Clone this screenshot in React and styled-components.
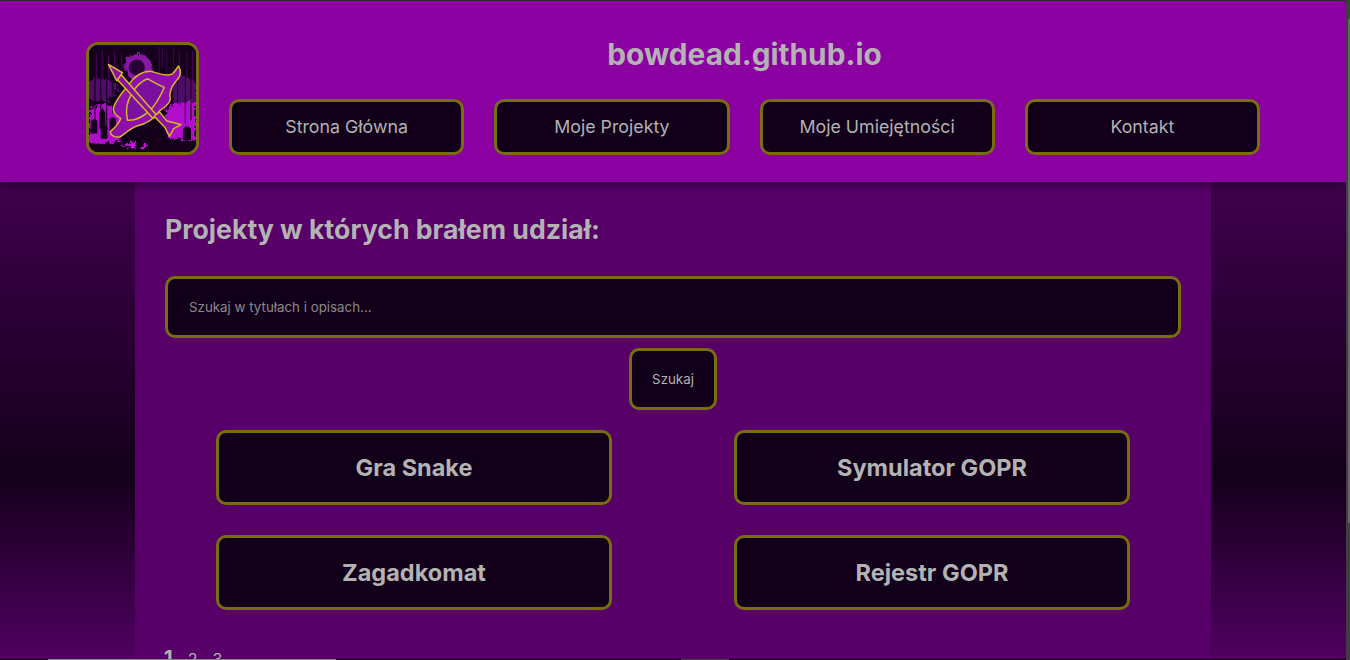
import React from 'react'
import styled, { createGlobalStyle } from 'styled-components'

const GlobalStyle = createGlobalStyle`
  html, body {
    margin: 0;
    height: 660px;
    overflow: hidden;
  }
  body {
    font-family: 'Inter', 'Liberation Sans', sans-serif;
    color: #b3b3b3;
    background: linear-gradient(to bottom, #3f004d 182px, #14001a 475px, #430052 620px, #50005f 660px) no-repeat;
  }
`

const Page = styled.div`
  width: 1346px;
  border-top: 1px solid #2e2e2e;
`

const Header = styled.header`
  position: relative;
  display: flex;
  gap: 30px;
  height: 181px;
  box-sizing: border-box;
  padding: 41px 86px 0;
  background: #8a00a1;
  box-shadow: 0 4px 8px rgba(0, 0, 0, 0.35);
`

const Logo = styled.div`
  flex: none;
  width: 113px;
  height: 113px;
  box-sizing: border-box;
  border: 3px solid #786d0f;
  border-radius: 12px;
  overflow: hidden;
  background: #14001a;

  svg {
    display: block;
    width: 100%;
    height: 100%;
  }
`

const HeaderColumn = styled.div`
  flex: 1;
  display: flex;
  flex-direction: column;
`

const SiteTitle = styled.h1`
  margin: 0;
  height: 57px;
  font-size: 29.8px;
  font-weight: 700;
  line-height: 24px;
  text-align: center;
`

const Nav = styled.nav`
  display: grid;
  grid-template-columns: repeat(4, 1fr);
  gap: 30px;
`

const Framed = styled.button`
  box-sizing: border-box;
  border: 3px solid #786d0f;
  border-radius: 10px;
  background: #12001a;
  color: #b3b3b3;
  font-family: inherit;
  padding: 0;
`

const NavButton = styled(Framed)`
  height: 56px;
  padding-bottom: 1px;
  font-size: 17.8px;
`

const Main = styled.main`
  width: 1076px;
  box-sizing: border-box;
  margin: 0 auto;
  padding: 30px 30px 40px;
  background: #560068;
`

const Heading = styled.h2`
  margin: 0 0 30px;
  height: 34px;
  font-size: 26.67px;
  line-height: 34px;
  font-weight: 700;
`

const SearchInput = styled.input`
  display: block;
  width: 100%;
  height: 62px;
  box-sizing: border-box;
  padding: 0 21px;
  border: 3px solid #786d0f;
  border-radius: 10px;
  background: #12001a;
  color: #b3b3b3;
  font-family: inherit;
  font-size: 13.33px;

  &::placeholder {
    color: #8a8a8a;
    opacity: 1;
  }
`

const SearchRow = styled.div`
  display: flex;
  justify-content: center;
  margin: 10px 0 20px;
`

const SearchButton = styled(Framed)`
  width: 88px;
  height: 62px;
  font-size: 13.33px;
`

const CardGrid = styled.div`
  display: grid;
  grid-template-columns: repeat(2, 396px);
  justify-content: center;
  gap: 30px 122px;
`

const Card = styled(Framed)`
  height: 75px;
  font-size: 23.5px;
  font-weight: 700;
`

const Pagination = styled.div`
  display: flex;
  align-items: baseline;
  gap: 15px;
  margin-top: 36px;
  margin-left: -1px;
`

const PageLink = styled.span`
  font-size: ${p => (p.$active ? '20px' : '16px')};
  font-weight: ${p => (p.$active ? 700 : 400)};
`

const ScrollTrackY = styled.div`
  position: fixed;
  top: 0;
  right: 0;
  bottom: 0;
  width: 4px;
  background: #3e3e3e;
`

const ScrollThumbY = styled.div`
  margin: 19px 0 0 2px;
  height: 504px;
  background: #666;
`

const ScrollTrackX = styled.div`
  position: fixed;
  left: 0;
  right: 4px;
  bottom: 0;
  height: 1px;
  background: #0d0010;
`

const ScrollThumbX = styled.div`
  position: absolute;
  top: 0;
  height: 1px;
  left: ${p => p.$left}px;
  width: ${p => p.$width}px;
  background: ${p => p.$color};
`

const STREAKS = [
  [75, 70, 190], [92, 60, 170], [110, 75, 200], [128, 60, 150], [150, 70, 140],
  [262, 50, 130], [272, 55, 110], [285, 60, 150], [305, 55, 130], [322, 60, 120],
  [345, 65, 180], [362, 60, 170],
]

const STONES = [
  'M88 295 V248 L97 232 L106 248 V295 Z',
  'M62 310 V272 Q72 260 82 272 V310 Z',
  'M118 305 V266 Q128 256 138 266 V305 Z',
  'M92 325 V290 Q102 280 112 290 V325 Z',
  'M198 350 V312 H206 V298 H212 V312 H220 V350 Z',
  'M245 340 V288 Q262 266 280 288 V340 Z',
  'M252 350 V320 Q266 305 280 320 V350 Z',
  'M338 330 V296 Q350 282 362 296 V330 Z',
  'M60 365 L60 338 L120 345 L150 365 Z',
  'M240 365 L300 340 L377 335 L377 365 Z',
]

const BOW_OUTER = 'M325 108 C335 125 330 140 318 152 C302 170 296 185 300 208 C298 222 282 232 268 242 C250 270 225 282 198 288 C178 296 165 310 150 320 C135 322 122 316 120 305 C135 292 146 280 152 265 C135 255 126 245 131 230 C140 205 158 185 175 165 C192 140 215 122 245 124 C265 130 285 140 305 132 C315 125 318 115 325 108 Z'
const BOW_INNER = 'M232 146 C210 155 195 172 185 190 C170 215 165 240 172 270 C195 272 220 258 238 242 C258 222 272 195 282 172 C265 165 248 155 232 146 Z'

function BowLogo() {
  return (
    <svg viewBox="57 45 320 320">
      <defs>
        <filter id="rough" x="-10%" y="-10%" width="120%" height="120%">
          <feTurbulence type="fractalNoise" baseFrequency="0.09" numOctaves="3" seed="4" />
          <feDisplacementMap in="SourceGraphic" scale="28" />
          <feGaussianBlur stdDeviation="2" />
        </filter>
        <filter id="soft">
          <feGaussianBlur stdDeviation="1.6" />
        </filter>
      </defs>
      <rect x="57" y="45" width="320" height="320" fill="#14001a" />
      <g filter="url(#rough)">
        <path d="M57 240 Q90 212 125 226 L160 262 L150 335 L57 345 Z" fill="#b00ccc" />
        <path d="M285 240 Q325 198 377 212 V330 L290 325 Z" fill="#b00ccc" />
        <path d="M57 150 Q100 135 150 170 L110 215 L57 210 Z" fill="#4e0866" />
        <path d="M300 135 Q345 130 377 160 V210 L310 220 Z" fill="#4e0866" />
        <path d="M150 345 Q190 328 240 345 Q190 362 150 345 Z" fill="#c818e0" />
        <circle cx="205" cy="112" r="40" fill="#8a14a8" />
      </g>
      <circle cx="200" cy="112" r="24" fill="#2c0438" filter="url(#soft)" />
      <g filter="url(#soft)">
        <g stroke="#14001a" strokeWidth="3">
          {STREAKS.map(([x, y1, y2]) => (
            <line key={x} x1={x} y1={y1 + 60} x2={x} y2={y2 + 100} />
          ))}
        </g>
        <g stroke="#6a0c88" strokeWidth="2.5" opacity="0.7">
          {STREAKS.map(([x, y1, y2]) => (
            <line key={x} x1={x + 5} y1={y1} x2={x + 5} y2={y2} />
          ))}
        </g>
        <g fill="#14001a">
          {STONES.map(d => (
            <path key={d} d={d} />
          ))}
        </g>
      </g>
      <path d={BOW_OUTER} fill="#8e10a8" stroke="#d8b428" strokeWidth="4.5" strokeLinejoin="round" />
      <path d={BOW_INNER} fill="#7a10a0" stroke="#d8b428" strokeWidth="4.5" strokeLinejoin="round" />
      <path d="M150 130 L262 258 L248 264 L136 142 Z" fill="#8a10a0" stroke="#d8b428" strokeWidth="4.5" strokeLinejoin="round" />
      <path d="M115 103 L157 128 L140 152 Z" fill="#8e10a8" stroke="#d8b428" strokeWidth="4.5" strokeLinejoin="round" />
      <path
        d="M252 258 L268 245 L290 272 L332 283 L310 295 L298 318 L283 290 Z"
        fill="#8e10a8"
        stroke="#d8b428"
        strokeWidth="4.5"
        strokeLinejoin="round"
      />
    </svg>
  )
}

const NAV_ITEMS = ['Strona Główna', 'Moje Projekty', 'Moje Umiejętności', 'Kontakt']
const PROJECTS = ['Gra Snake', 'Symulator GOPR', 'Zagadkomat', 'Rejestr GOPR']

export default function App() {
  return (
    <Page>
      <GlobalStyle />
      <Header>
        <Logo>
          <BowLogo />
        </Logo>
        <HeaderColumn>
          <SiteTitle>bowdead.github.io</SiteTitle>
          <Nav>
            {NAV_ITEMS.map(item => (
              <NavButton key={item}>{item}</NavButton>
            ))}
          </Nav>
        </HeaderColumn>
      </Header>
      <Main>
        <Heading>Projekty w których brałem udział:</Heading>
        <SearchInput placeholder="Szukaj w tytułach i opisach..." />
        <SearchRow>
          <SearchButton>Szukaj</SearchButton>
        </SearchRow>
        <CardGrid>
          {PROJECTS.map(name => (
            <Card key={name}>{name}</Card>
          ))}
        </CardGrid>
        <Pagination>
          <PageLink $active>1</PageLink>
          <PageLink>2</PageLink>
          <PageLink>3</PageLink>
        </Pagination>
      </Main>
      <ScrollTrackY>
        <ScrollThumbY />
      </ScrollTrackY>
      <ScrollTrackX>
        <ScrollThumbX $left={48} $width={288} $color="#8a8a8a" />
        <ScrollThumbX $left={681} $width={48} $color="#444" />
      </ScrollTrackX>
    </Page>
  )
}
